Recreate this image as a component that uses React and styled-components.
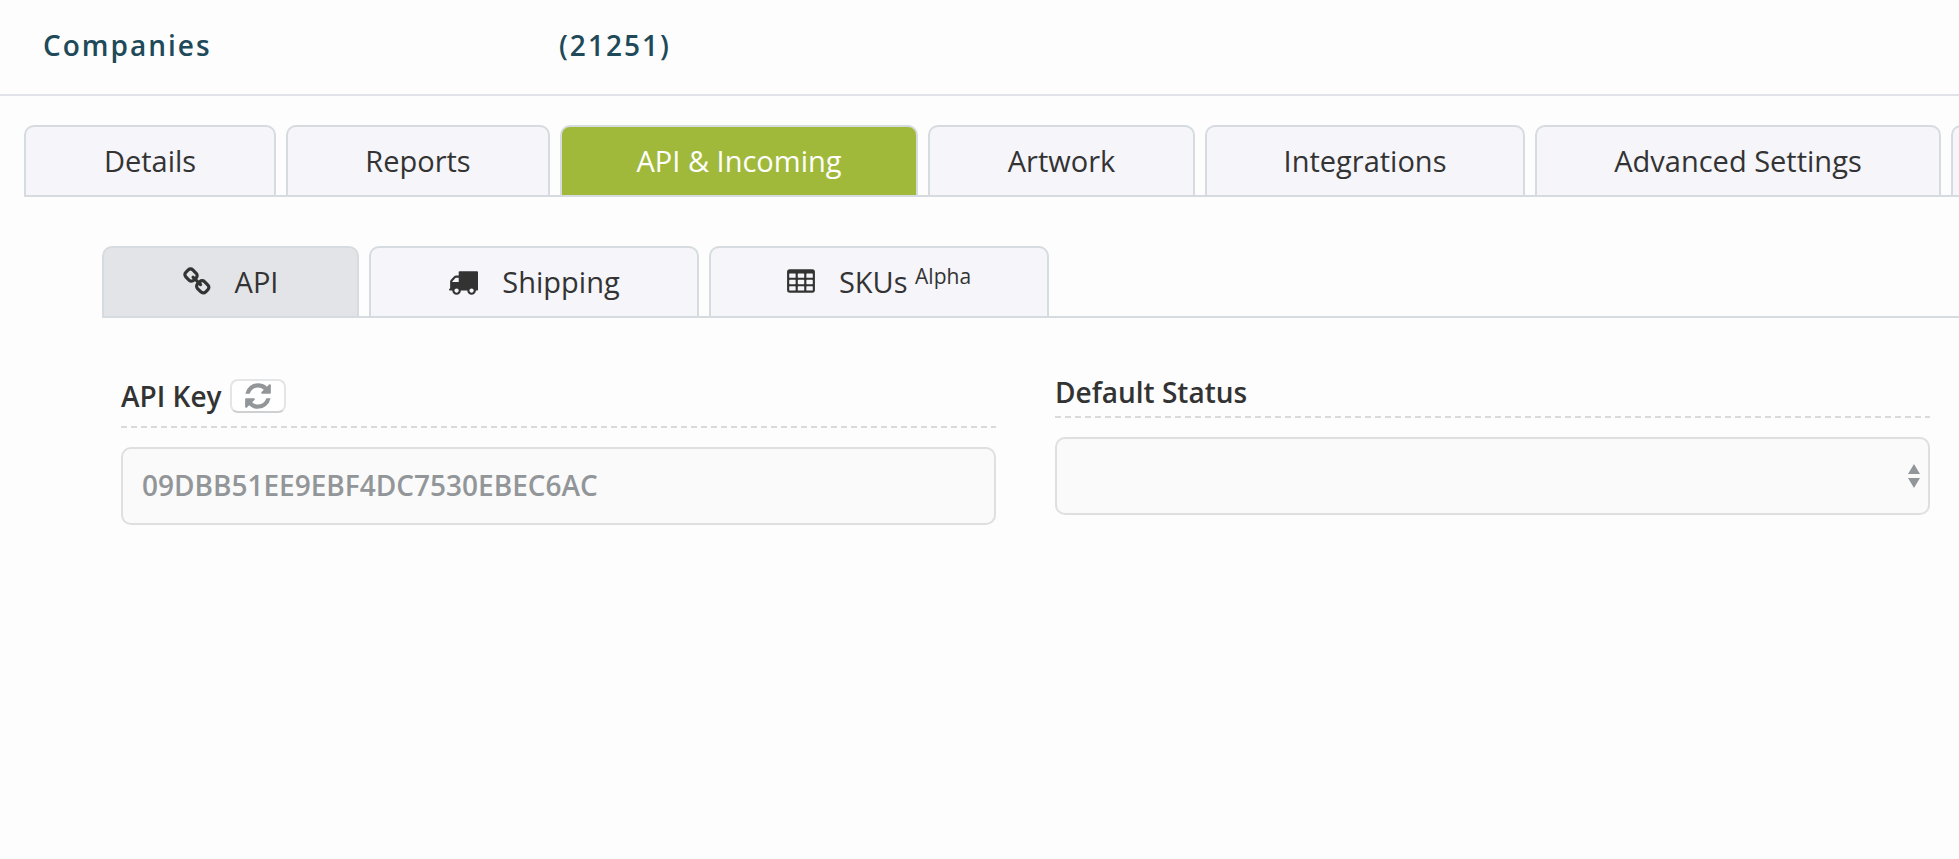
import React from 'react';
import styled, { createGlobalStyle, css } from 'styled-components';

const border = '#d6dbdf';
const ink = '#333333';

const GlobalStyle = createGlobalStyle`
  *, *::before, *::after { box-sizing: border-box; }
  body {
    margin: 0;
    background: #fdfdfd;
    color: ${ink};
    font-family: "Open Sans", "Noto Sans", sans-serif;
    font-size: 29px;
    line-height: 40px;
    overflow-x: hidden;
  }
`;

const Header = styled.header`
  display: flex;
  align-items: center;
  height: 96px;
  padding: 0 43px 4px;
  border-bottom: 2px solid #e1e3e8;
`;

const Title = styled.h1`
  display: flex;
  margin: 0;
  color: #204a59;
  font-size: 28px;
  font-weight: 600;
  letter-spacing: 2px;
`;

const TitleName = styled.span`
  flex: 0 0 516px;
`;

const TabList = styled.nav`
  display: flex;
  gap: 10px;
  overflow: hidden;
  height: 72px;
  box-shadow: inset 0 -2px ${border};
`;

const MainTabs = styled(TabList)`
  margin: 29px 0 0 24px;
`;

const SubTabs = styled(TabList)`
  margin: 49px 0 0 102px;
`;

const tones = {
  plain: css`background: #f5f5fa; color: ${ink};`,
  green: css`background: #a0b93b; color: #ffffff;`,
  grey: css`background: #e3e4e7; color: ${ink};`,
};

const Tab = styled.button`
  display: flex;
  flex: 0 0 ${p => p.$width}px;
  align-items: center;
  justify-content: center;
  gap: 24px;
  height: 70px;
  margin: 0;
  padding: 0;
  border: 2px solid ${border};
  border-bottom: 0;
  border-radius: 10px 10px 0 0;
  font: inherit;
  font-weight: 400;
  white-space: nowrap;
  cursor: pointer;
  ${p => tones[p.$tone || 'plain']}
`;

const Superscript = styled.sup`
  font-size: 21px;
  line-height: 0;
  vertical-align: 9px;
`;

const Fields = styled.main`
  display: grid;
  grid-template-columns: 1fr 1fr;
  align-items: start;
  gap: 59px;
  padding: 56px 29px 0 121px;
`;

const Field = styled.section`
  display: flex;
  flex-direction: column;
`;

const LabelRow = styled.div`
  display: flex;
  align-items: center;
  gap: 8px;
  height: ${p => (p.$tall ? 54 : 44)}px;
  padding-bottom: ${p => (p.$tall ? 10 : 8)}px;
  background: repeating-linear-gradient(90deg, #d9dadb 0 6px, transparent 6px 10px) bottom / 100% 2px no-repeat;
  font-size: 28px;
  font-weight: 600;
`;

const RefreshButton = styled.button`
  display: flex;
  align-items: center;
  justify-content: center;
  width: 56px;
  height: 34px;
  padding: 0;
  border: 2px solid #e4e5e7;
  border-bottom-color: #cfd0d2;
  border-radius: 8px;
  background: #ffffff;
  color: #929699;
  cursor: pointer;
`;

const control = css`
  width: 100%;
  height: 78px;
  padding: 0 19px 2px;
  border: 2px solid #dddfe0;
  border-radius: 10px;
  background: #fafafa;
  color: #929699;
  font: inherit;
  font-size: 28px;
  font-weight: 550;
`;

const TextInput = styled.input`
  ${control}
  margin: 19px 0 0;
`;

const SelectWrap = styled.div`
  position: relative;
  margin-top: 19px;
`;

const Select = styled.select`
  ${control}
  display: block;
  margin: 0;
  appearance: none;
`;

const SelectArrows = styled.svg`
  position: absolute;
  top: 27px;
  right: 10px;
  pointer-events: none;
`;

const Icon = ({ box, width, height = 30, children }) => (
  <svg viewBox={box} width={width} height={height} fill="currentColor" aria-hidden="true">
    {children}
  </svg>
);

const LinkIcon = () => (
  <Icon box="64 0 1680 1792" width={28}>
    <path d="M1520 1216q0-40-28-68l-208-208q-28-28-68-28-42 0-72 32 3 3 19 18.500t21.500 21.500 15 19 13 25.500 3.500 27.500q0 40-28 68t-68 28q-15 0-27.500-3.500t-25.500-13-19-15-21.500-21.500-18.500-19q-33 31-33 73 0 40 28 68l206 207q27 27 68 27 40 0 68-26l147-146q28-28 28-67zm-703-705q0-40-28-68l-206-207q-28-28-68-28-39 0-68 27l-147 146q-28 28-28 67 0 40 28 68l208 208q27 27 68 27 42 0 72-31-3-3-19-18.500t-21.500-21.500-15-19-13-25.500-3.500-27.500q0-40 28-68t68-28q15 0 27.500 3.500t25.500 13 19 15 21.500 21.500 18.500 19q33-31 33-73zm895 705q0 120-85 203l-147 146q-83 83-203 83-121 0-204-85l-206-207q-83-83-83-203 0-123 88-209l-88-88q-86 88-208 88-120 0-204-84l-208-208q-84-84-84-204t85-203l147-146q83-83 203-83 121 0 204 85l206 207q83 83 83 203 0 123-88 209l88 88q86-88 208-88 120 0 204 84l208 208q84 84 84 204z" />
  </Icon>
);

const TruckIcon = () => (
  <Icon box="0 0 1792 1792" width={30}>
    <path d="M640 1408q0-52-38-90t-90-38-90 38-38 90 38 90 90 38 90-38 38-90zm-384-512h384v-256h-158q-13 0-22 9l-195 195q-9 9-9 22v30zm1280 512q0-52-38-90t-90-38-90 38-38 90 38 90 90 38 90-38 38-90zm256-1088v1024q0 15-4 26.500t-13.500 18.500-16.500 11.500-23.500 6-22.500 2-25.500 0-22.500-.5q0 106-75 181t-181 75-181-75-75-181h-384q0 106-75 181t-181 75-181-75-75-181h-64q-3 0-22.500.5t-25.500 0-22.500-2-23.500-6-16.500-11.500-13.500-18.500-4-26.500q0-26 19-45t45-19v-320q0-8-.5-35t0-38 2.500-34.500 6.500-37 14-30.500 22.500-30l198-198q19-19 50.500-32t58.500-13h160v-192q0-26 19-45t45-19h1024q26 0 45 19t19 45z" />
  </Icon>
);

const cell = (x, y) =>
  `M${x + 32} ${y}q-32 0-32 32v192q0 32 32 32h320q32 0 32-32v-192q0-32-32-32Z`;

const cells = [384, 768, 1152]
  .flatMap(y => [192, 704, 1216].map(x => cell(x, y)))
  .join('');

const TableIcon = () => (
  <Icon box="64 0 1664 1792" width={28}>
    <path
      fillRule="evenodd"
      d={`M224 128H1568Q1728 128 1728 288V1376Q1728 1536 1568 1536H224Q64 1536 64 1376V288Q64 128 224 128Z${cells}`}
    />
  </Icon>
);

const RefreshIcon = () => (
  <Icon box="0 0 1792 1792" width={30}>
    <path d="M1639 1056q0 5-1 7-64 268-268 434.500t-478 166.500q-146 0-282.500-55t-243.500-157l-129 129q-19 19-45 19t-45-19-19-45v-448q0-26 19-45t45-19h448q26 0 45 19t19 45-19 45l-137 137q71 66 161 102t187 36q134 0 250-65t186-179q11-17 53-117 8-23 30-23h192q13 0 22.500 9.500t9.500 22.500zm25-800v448q0 26-19 45t-45 19h-448q-26 0-45-19t-19-45 19-45l138-138q-148-137-349-137-134 0-250 65t-186 179q-11 17-53 117-8 23-30 23h-199q-13 0-22.500-9.500t-9.500-22.500v-7q65-268 270-434.500t480-166.500q146 0 284 55.500t245 156.500l130-129q19-19 45-19t45 19 19 45z" />
  </Icon>
);

const mainTabs = [
  { label: 'Details', width: 252 },
  { label: 'Reports', width: 264 },
  { label: 'API & Incoming', width: 358, tone: 'green' },
  { label: 'Artwork', width: 267 },
  { label: 'Integrations', width: 320 },
  { label: 'Advanced Settings', width: 406 },
];

export default function App() {
  return (
    <>
      <GlobalStyle />
      <Header>
        <Title>
          <TitleName>Companies</TitleName>
          <span>(21251)</span>
        </Title>
      </Header>

      <MainTabs aria-label="Company sections">
        {mainTabs.map(tab => (
          <Tab key={tab.label} type="button" $width={tab.width} $tone={tab.tone}>
            {tab.label}
          </Tab>
        ))}
        <Tab type="button" $width={200} aria-label="More sections" />
      </MainTabs>

      <SubTabs aria-label="API and incoming">
        <Tab type="button" $width={257} $tone="grey">
          <LinkIcon />
          <span>API</span>
        </Tab>
        <Tab type="button" $width={330}>
          <TruckIcon />
          <span>Shipping</span>
        </Tab>
        <Tab type="button" $width={340}>
          <TableIcon />
          <span>
            SKUs <Superscript>Alpha</Superscript>
          </span>
        </Tab>
      </SubTabs>

      <Fields>
        <Field>
          <LabelRow $tall>
            <label htmlFor="api-key">API Key</label>
            <RefreshButton type="button" aria-label="Refresh API key">
              <RefreshIcon />
            </RefreshButton>
          </LabelRow>
          <TextInput id="api-key" type="text" readOnly value="09DBB51EE9EBF4DC7530EBEC6AC" />
        </Field>
        <Field>
          <LabelRow>
            <label htmlFor="default-status">Default Status</label>
          </LabelRow>
          <SelectWrap>
            <Select id="default-status" defaultValue="">
              <option value="" />
            </Select>
            <SelectArrows width="12" height="24" viewBox="0 0 12 24" fill="#929699" aria-hidden="true">
              <path d="M6 0 12 10H0ZM0 14H12L6 24Z" />
            </SelectArrows>
          </SelectWrap>
        </Field>
      </Fields>
    </>
  );
}
